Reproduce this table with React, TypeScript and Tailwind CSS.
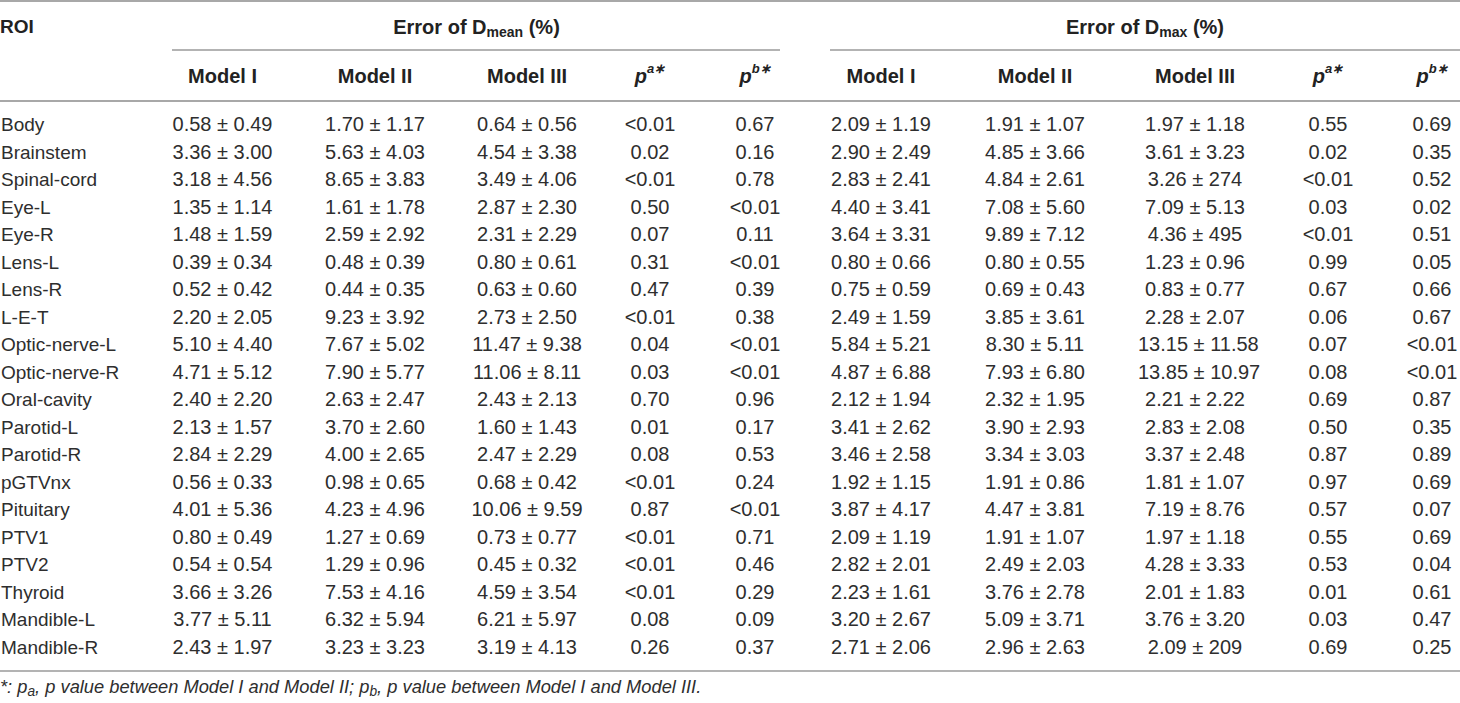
import React from "react";

type Row = [string, ...string[]];

const rows: Row[] = [
  ["Body", "0.58 ± 0.49", "1.70 ± 1.17", "0.64 ± 0.56", "<0.01", "0.67", "2.09 ± 1.19", "1.91 ± 1.07", "1.97 ± 1.18", "0.55", "0.69"],
  ["Brainstem", "3.36 ± 3.00", "5.63 ± 4.03", "4.54 ± 3.38", "0.02", "0.16", "2.90 ± 2.49", "4.85 ± 3.66", "3.61 ± 3.23", "0.02", "0.35"],
  ["Spinal-cord", "3.18 ± 4.56", "8.65 ± 3.83", "3.49 ± 4.06", "<0.01", "0.78", "2.83 ± 2.41", "4.84 ± 2.61", "3.26 ± 274", "<0.01", "0.52"],
  ["Eye-L", "1.35 ± 1.14", "1.61 ± 1.78", "2.87 ± 2.30", "0.50", "<0.01", "4.40 ± 3.41", "7.08 ± 5.60", "7.09 ± 5.13", "0.03", "0.02"],
  ["Eye-R", "1.48 ± 1.59", "2.59 ± 2.92", "2.31 ± 2.29", "0.07", "0.11", "3.64 ± 3.31", "9.89 ± 7.12", "4.36 ± 495", "<0.01", "0.51"],
  ["Lens-L", "0.39 ± 0.34", "0.48 ± 0.39", "0.80 ± 0.61", "0.31", "<0.01", "0.80 ± 0.66", "0.80 ± 0.55", "1.23 ± 0.96", "0.99", "0.05"],
  ["Lens-R", "0.52 ± 0.42", "0.44 ± 0.35", "0.63 ± 0.60", "0.47", "0.39", "0.75 ± 0.59", "0.69 ± 0.43", "0.83 ± 0.77", "0.67", "0.66"],
  ["L-E-T", "2.20 ± 2.05", "9.23 ± 3.92", "2.73 ± 2.50", "<0.01", "0.38", "2.49 ± 1.59", "3.85 ± 3.61", "2.28 ± 2.07", "0.06", "0.67"],
  ["Optic-nerve-L", "5.10 ± 4.40", "7.67 ± 5.02", "11.47 ± 9.38", "0.04", "<0.01", "5.84 ± 5.21", "8.30 ± 5.11", "13.15 ± 11.58", "0.07", "<0.01"],
  ["Optic-nerve-R", "4.71 ± 5.12", "7.90 ± 5.77", "11.06 ± 8.11", "0.03", "<0.01", "4.87 ± 6.88", "7.93 ± 6.80", "13.85 ± 10.97", "0.08", "<0.01"],
  ["Oral-cavity", "2.40 ± 2.20", "2.63 ± 2.47", "2.43 ± 2.13", "0.70", "0.96", "2.12 ± 1.94", "2.32 ± 1.95", "2.21 ± 2.22", "0.69", "0.87"],
  ["Parotid-L", "2.13 ± 1.57", "3.70 ± 2.60", "1.60 ± 1.43", "0.01", "0.17", "3.41 ± 2.62", "3.90 ± 2.93", "2.83 ± 2.08", "0.50", "0.35"],
  ["Parotid-R", "2.84 ± 2.29", "4.00 ± 2.65", "2.47 ± 2.29", "0.08", "0.53", "3.46 ± 2.58", "3.34 ± 3.03", "3.37 ± 2.48", "0.87", "0.89"],
  ["pGTVnx", "0.56 ± 0.33", "0.98 ± 0.65", "0.68 ± 0.42", "<0.01", "0.24", "1.92 ± 1.15", "1.91 ± 0.86", "1.81 ± 1.07", "0.97", "0.69"],
  ["Pituitary", "4.01 ± 5.36", "4.23 ± 4.96", "10.06 ± 9.59", "0.87", "<0.01", "3.87 ± 4.17", "4.47 ± 3.81", "7.19 ± 8.76", "0.57", "0.07"],
  ["PTV1", "0.80 ± 0.49", "1.27 ± 0.69", "0.73 ± 0.77", "<0.01", "0.71", "2.09 ± 1.19", "1.91 ± 1.07", "1.97 ± 1.18", "0.55", "0.69"],
  ["PTV2", "0.54 ± 0.54", "1.29 ± 0.96", "0.45 ± 0.32", "<0.01", "0.46", "2.82 ± 2.01", "2.49 ± 2.03", "4.28 ± 3.33", "0.53", "0.04"],
  ["Thyroid", "3.66 ± 3.26", "7.53 ± 4.16", "4.59 ± 3.54", "<0.01", "0.29", "2.23 ± 1.61", "3.76 ± 2.78", "2.01 ± 1.83", "0.01", "0.61"],
  ["Mandible-L", "3.77 ± 5.11", "6.32 ± 5.94", "6.21 ± 5.97", "0.08", "0.09", "3.20 ± 2.67", "5.09 ± 3.71", "3.76 ± 3.20", "0.03", "0.47"],
  ["Mandible-R", "2.43 ± 1.97", "3.23 ± 3.23", "3.19 ± 4.13", "0.26", "0.37", "2.71 ± 2.06", "2.96 ± 2.63", "2.09 ± 209", "0.69", "0.25"],
];

// ROI | Dmean: I II III pa pb | gap | Dmax: I II III pa pb
const cols =
  "grid grid-cols-[165px_115px_190px_114px_132px_78px_36px_102px_206px_114px_152px_56px]";

function PHead({ letter }: { letter: string }) {
  return (
    <span className="italic">
      p<sup className="text-[13px] top-[-0.7em]">{letter}∗</sup>
    </span>
  );
}

function ModelHeads() {
  return (
    <>
      <div className="text-center">Model I</div>
      <div className="text-center">Model II</div>
      <div className="text-center">Model III</div>
      <div className="text-center">
        <PHead letter="a" />
      </div>
      <div className="text-center">
        <PHead letter="b" />
      </div>
    </>
  );
}

export default function App() {
  return (
    <div
      className="w-[1460px] h-[703px] bg-white text-[#2e2e2e] overflow-hidden"
      style={{ fontFamily: '"Liberation Sans", Arial, sans-serif' }}
    >
      {/* header */}
      <div className="border-t-2 border-[#a8a8a8] border-b-2 font-bold text-[20px] text-[#222]">
        <div className={`${cols} h-[49px]`}>
          <div className="flex items-center pt-[2px] text-[19px]">ROI</div>
          <div className="col-span-5 flex flex-col">
            <div className="flex-1 flex items-center justify-center pt-[2px] pr-[6px]">
              <span>
                Error of D<sub className="text-[14px]">mean</sub> (%)
              </span>
            </div>
            <div className="h-[2px] bg-[#b3b3b3] ml-[7px] mr-[14px]" />
          </div>
          <div />
          <div className="col-span-5 flex flex-col">
            <div className="flex-1 flex items-center justify-center pt-[2px]">
              <span>
                Error of D<sub className="text-[14px]">max</sub> (%)
              </span>
            </div>
            <div className="h-[2px] bg-[#b3b3b3]" />
          </div>
        </div>
        <div className={`${cols} h-[49px] items-center`}>
          <div />
          <ModelHeads />
          <div />
          <ModelHeads />
        </div>
      </div>

      {/* body */}
      <div className="pt-[9px] pb-[9px] border-b-2 border-[#b3b3b3] text-[20px]">
        {rows.map((r) => (
          <div
            key={r[0]}
            className={`${cols} h-[27.5px] leading-[27.5px] items-baseline whitespace-nowrap`}
          >
            <div className="pl-[1px] text-[19px]">{r[0]}</div>
            {r.slice(1, 6).map((v, i) => (
              <div key={i} className="text-center">
                {v}
              </div>
            ))}
            <div />
            {r.slice(6).map((v, i) => (
              <div key={i + 6} className="text-center">
                {v}
              </div>
            ))}
          </div>
        ))}
      </div>

      <p className="pt-[5px] text-[18.3px] leading-[20px] italic">
        *: p<sub>a</sub>, p value between Model I and Model II; p<sub>b</sub>, p value between Model I and
        Model III.
      </p>
    </div>
  );
}
